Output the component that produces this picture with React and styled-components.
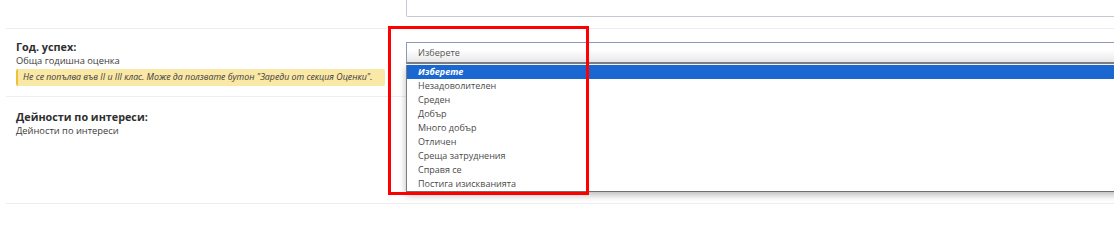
import React from "react";
import styled, { createGlobalStyle } from "styled-components";

const Global = createGlobalStyle`
  html, body { margin: 0; padding: 0; background: #fff; overflow: hidden; }
  body { font-family: "Open Sans", "Noto Sans", Arial, sans-serif; color: #333; }
`;

const Page = styled.div`
  position: relative;
  width: calc(100% + 20px);
  padding-left: 6px;
  box-sizing: border-box;
`;

const TopRow = styled.div`
  height: 28px;
  display: grid;
  grid-template-columns: 400px 1fr;
`;

const TextareaStub = styled.div`
  grid-column: 2;
  height: 17px;
  box-sizing: border-box;
  border: 1px solid #c4c8d1;
  border-top: none;
  border-radius: 0 0 2px 2px;
`;

const FieldRow = styled.div`
  display: grid;
  grid-template-columns: 10px 369px 21px 1fr;
  border-top: 1px solid #eceef3;
  border-bottom: ${(p) => (p.$last ? "1px solid #eceef3" : "none")};
  min-height: ${(p) => p.$minHeight}px;
  box-sizing: border-box;
`;

const LabelCol = styled.div`
  grid-column: 2;
  padding: ${(p) => p.$top}px 0 10px;
`;

const Label = styled.div`
  font-size: 10.8px;
  font-weight: 700;
  line-height: 16px;
  color: #2f2f2f;
`;

const Hint = styled.div`
  font-size: 9.3px;
  line-height: 12px;
  color: #3a3a3a;
`;

const Note = styled.div`
  margin-top: 2px;
  height: 17px;
  box-sizing: border-box;
  padding: 2px 4px 2px 5px;
  background: #f9e8a6;
  border-left: 2px solid #f0c233;
  border-radius: 2px;
  font-size: 8.8px;
  line-height: 13px;
  font-style: italic;
  color: #3b3b3b;
  white-space: nowrap;
`;

const ControlCol = styled.div`
  grid-column: 4;
  padding-top: 13px;
`;

const SelectWrap = styled.div`
  position: relative;
`;

const SelectBox = styled.div`
  height: 22px;
  box-sizing: border-box;
  border: 1px solid #8e9bb7;
  border-bottom: 2px solid #7f8186;
  border-right: none;
  background: linear-gradient(#ffffff 35%, #e8e8e8);
  padding-left: 11px;
  font-size: 9.1px;
  line-height: 20px;
  color: #555;
`;

const OptionList = styled.div`
  position: absolute;
  left: 0;
  right: 0;
  top: 23px;
  z-index: 2;
  background: #fff;
  border-left: 1px solid #7d7d7d;
  border-bottom: 1px solid #6f6f6f;
  box-shadow: 0 3px 7px rgba(0, 0, 0, 0.28);
`;

const Option = styled.div`
  height: 14px;
  padding-left: 11px;
  font-size: 9px;
  line-height: 14px;
  color: ${(p) => (p.$active ? "#fff" : "#4a4a4a")};
  background: ${(p) => (p.$active ? "#1b67d1" : "transparent")};
  font-weight: ${(p) => (p.$active ? 700 : 400)};
  font-style: ${(p) => (p.$active ? "italic" : "normal")};
  white-space: nowrap;
`;

const Highlight = styled.div`
  position: absolute;
  left: 388px;
  top: 26px;
  width: 201px;
  height: 169px;
  box-sizing: border-box;
  border: 3px solid #ff0000;
  z-index: 5;
  pointer-events: none;
`;

const options = [
  "Изберете",
  "Незадоволителен",
  "Среден",
  "Добър",
  "Много добър",
  "Отличен",
  "Среща затруднения",
  "Справя се",
  "Постига изискванията",
];

export default function App() {
  return (
    <>
      <Global />
      <Page>
        <TopRow>
          <TextareaStub />
        </TopRow>
        <FieldRow $minHeight={68}>
          <LabelCol $top={10}>
            <Label>Год. успех:</Label>
            <Hint>Обща годишна оценка</Hint>
            <Note>
              Не се попълва във II и III клас. Може да ползвате бутон "Зареди от секция Оценки".
            </Note>
          </LabelCol>
          <ControlCol>
            <SelectWrap>
              <SelectBox>Изберете</SelectBox>
              <OptionList>
                {options.map((o, i) => (
                  <Option key={o} $active={i === 0}>
                    {o}
                  </Option>
                ))}
              </OptionList>
            </SelectWrap>
          </ControlCol>
        </FieldRow>
        <FieldRow $minHeight={108} $last>
          <LabelCol $top={12}>
            <Label>Дейности по интереси:</Label>
            <Hint>Дейности по интереси</Hint>
          </LabelCol>
        </FieldRow>
        <Highlight />
      </Page>
    </>
  );
}
